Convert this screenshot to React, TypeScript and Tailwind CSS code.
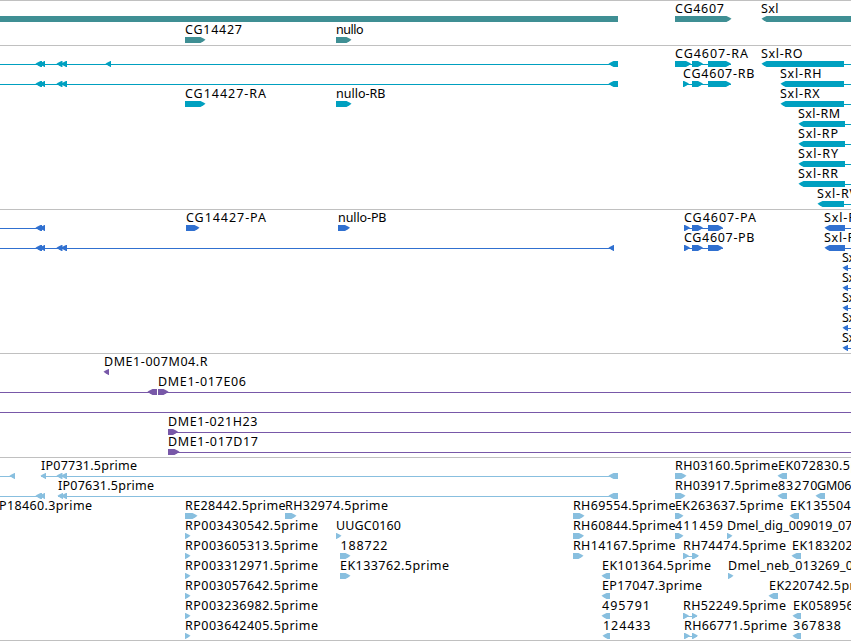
type Label = { text: string; x: number; end?: number };

// l / r = strand of an arrow, line = intron, bar = feature without a head
type Feature = ["l" | "r" | "line" | "bar", number, number];

type RowData = { labels?: Label[]; features: Feature[] };

interface TrackProps {
  name: string;
  color: string;
  rows: RowData[];
  rowHeight?: number;
  className: string;
}

const HEAD = 5;
const TOP = 15;

const label = (text: string, x: number, end?: number): Label => ({ text, x, end });

// Exons shared by several transcripts
const cg4607: Feature[] = [["r", 692, 703], ["r", 708, 731]];
const exonsA: Feature[] = [["l", 35.5, 42], ["l", 39.5, 45]];
const exonsB: Feature[] = [["l", 56.5, 62.5], ["l", 61, 67]];

const sxlTranscript = (name: string): RowData => ({
  labels: [label(name, 798, name === "Sxl-RM" ? 840 : 838)],
  features: [["l", 798.5, 845], ["line", 845, 851]],
});

const sxlProtein = (): RowData => ({
  labels: [label("Sxl", 842, 858)],
  features: [["l", 842.5, 848], ["line", 848, 851]],
});

const genes: RowData[] = [
  {
    labels: [label("CG4607", 675, 724), label("Sxl", 761, 778.5)],
    features: [["bar", 0, 618], ["r", 675, 731.5], ["l", 761.5, 870]],
  },
  {
    labels: [label("CG14427", 185, 242), label("nullo", 336, 363.5)],
    features: [["r", 185, 205.5], ["r", 336, 351.5]],
  },
];

const transcripts: RowData[] = [
  {
    labels: [label("CG4607-RA", 675, 748), label("Sxl-RO", 761, 802.5)],
    features: [
      ["line", 0, 618], ...exonsA, ...exonsB, ["l", 105.5, 111], ["l", 608.5, 618],
      ["line", 675, 731], ["r", 675, 691], ...cg4607,
      ["l", 761.5, 844], ["line", 844, 851],
    ],
  },
  {
    labels: [label("CG4607-RB", 683, 754.5), label("Sxl-RH", 780, 821.5)],
    features: [
      ["line", 0, 618], ...exonsA, ...exonsB, ["l", 608.5, 618],
      ["line", 683, 731], ["r", 683, 689], ...cg4607,
      ["l", 780.5, 844], ["line", 844, 851],
    ],
  },
  {
    labels: [label("CG14427-RA", 185, 266), label("nullo-RB", 336, 385.5), label("Sxl-RX", 780, 819.5)],
    features: [["r", 185, 205.5], ["r", 336, 351.5], ["l", 780.5, 844], ["line", 844, 851]],
  },
  sxlTranscript("Sxl-RM"),
  sxlTranscript("Sxl-RP"),
  sxlTranscript("Sxl-RY"),
  sxlTranscript("Sxl-RR"),
  {
    labels: [label("Sxl-RV", 817, 857)],
    features: [["l", 817.5, 844], ["line", 844, 851]],
  },
];

const cg4607Protein: Feature[] = [["line", 684, 723], ["r", 684, 690], ["r", 692, 703], ["r", 708, 723]];

const proteins: RowData[] = [
  {
    labels: [
      label("CG14427-PA", 186, 266), label("nullo-PB", 338, 386.5),
      label("CG4607-PA", 684, 756), label("Sxl-PA", 824, 864),
    ],
    features: [
      ["line", 0, 45], ...exonsA, ["r", 186, 199.5], ["r", 338, 350],
      ...cg4607Protein, ["l", 824.5, 845], ["line", 845, 851],
    ],
  },
  {
    labels: [label("CG4607-PB", 684, 754.5), label("Sxl-PB", 824, 864)],
    features: [
      ["line", 0, 614], ...exonsA, ...exonsB, ["l", 608.5, 614],
      ...cg4607Protein, ["l", 824.5, 845], ["line", 845, 851],
    ],
  },
  sxlProtein(),
  sxlProtein(),
  sxlProtein(),
  sxlProtein(),
  sxlProtein(),
];

const bacs: RowData[] = [
  { labels: [label("DME1-007M04.R", 104, 207.5)], features: [["l", 103.5, 109]] },
  {
    labels: [label("DME1-017E06", 158, 246)],
    features: [["line", 0, 157], ["l", 147.5, 157], ["line", 158, 851], ["r", 158, 168.5]],
  },
  { features: [["line", 0, 851]] },
  { labels: [label("DME1-021H23", 168, 257.5)], features: [["line", 168, 851], ["r", 168, 178]] },
  { labels: [label("DME1-017D17", 168, 258)], features: [["line", 168, 851], ["r", 168, 179.5]] },
];

const ests: RowData[] = [
  {
    labels: [label("IP07731.5prime", 41, 137), label("RH03160.5prime", 675, 778), label("EK072830.5prime", 778, 887)],
    features: [
      ["line", 0, 15], ["l", 9.5, 15], ["line", 41, 618], ["l", 40.5, 46], ...exonsB,
      ["l", 608.5, 618], ["r", 675, 686.5], ["l", 777.5, 787],
    ],
  },
  {
    labels: [
      label("IP07631.5prime", 58, 154), label("RH03917.5prime", 675, 778),
      label("83270", 778, 817.5), label("GM06", 817, 851.5),
    ],
    features: [
      ["line", 0, 45], ...exonsA, ["line", 58, 618], ["l", 57.5, 63], ["l", 61, 67],
      ["l", 608.5, 618], ["r", 675, 685.5], ["l", 777.5, 787], ["l", 815.5, 825],
    ],
  },
  {
    labels: [
      label("P18460.3prime", -1, 92), label("RE28442.5prime", 185, 285.5), label("RH32974.5prime", 285, 388),
      label("RH69554.5prime", 573, 675.5), label("EK263637.5prime", 675, 783.5), label("EK135504.5prime", 790, 899),
    ],
    features: [["r", 185, 197.5], ["r", 285, 296.5], ["r", 573, 584.5], ["r", 675, 683.5], ["l", 789.5, 799]],
  },
  {
    labels: [
      label("RP003430542.5prime", 185, 318), label("UUGC0160", 336, 401), label("RH60844.5prime", 573, 675.5),
      label("411459", 675, 723), label("Dmel_dig_009019_07", 727, 852.5),
    ],
    features: [["r", 185, 190.5], ["r", 336, 341.5], ["r", 573, 584], ["r", 675, 683.5], ["r", 727, 732.5]],
  },
  {
    labels: [
      label("RP003605313.5prime", 185, 318), label("188722", 340.5, 387.5), label("RH14167.5prime", 573, 675.5),
      label("RH74474.5prime", 683, 786), label("EK183202.5prime", 792, 901),
    ],
    features: [
      ["r", 185, 190.5], ["r", 340, 350.5], ["r", 573, 583.5],
      ["line", 683, 698], ["r", 683, 689], ["r", 692, 699], ["l", 791.5, 801],
    ],
  },
  {
    labels: [
      label("RP003312971.5prime", 185, 318), label("EK133762.5prime", 340, 449),
      label("EK101364.5prime", 602, 711), label("Dmel_neb_013269_0", 728, 853),
    ],
    features: [["r", 185, 190.5], ["r", 340, 350.5], ["l", 601.5, 610], ["r", 728, 733.5]],
  },
  {
    labels: [label("RP003057642.5prime", 185, 318), label("EP17047.3prime", 602, 702), label("EK220742.5prime", 769, 878)],
    features: [["r", 185, 190.5], ["l", 601.5, 610], ["l", 768.5, 778]],
  },
  {
    labels: [
      label("RP003236982.5prime", 185, 318), label("495791", 602, 650),
      label("RH52249.5prime", 683, 786), label("EK058956.5prime", 793, 902),
    ],
    features: [
      ["r", 185, 190.5], ["l", 601.5, 610],
      ["line", 683, 697], ["r", 683, 689], ["r", 692, 697.5], ["l", 792.5, 801],
    ],
  },
  {
    labels: [
      label("RP003642405.5prime", 185, 318), label("124433", 603, 650.5),
      label("RH66771.5prime", 684, 787), label("367838", 793, 841),
    ],
    features: [
      ["r", 185, 190.5], ["l", 602.5, 610],
      ["line", 684, 697], ["r", 684, 690], ["r", 692, 698], ["l", 792.5, 801],
    ],
  },
];

function Glyph({ feature }: { feature: Feature }) {
  const [kind, start, end] = feature;

  if (kind === "line") return <rect x={start} y={TOP + 3} width={end - start} height={1} />;
  if (kind === "bar") return <rect x={start} y={TOP} width={end - start} height={6} />;

  // Arrow head, slightly bulged so that it stays solid at this size
  const dir = kind === "r" ? 1 : -1;
  const tip = kind === "r" ? end : start;
  const tail = kind === "r" ? start : end;
  const neck = tip - dir * HEAD;
  const bulge = tip - dir * 2;
  const points = [
    [tail, TOP],
    [neck, TOP],
    [bulge, TOP + 1.4],
    [tip, TOP + 2.7],
    [bulge, TOP + 4.2],
    [neck, TOP + 6],
    [tail, TOP + 6],
  ];
  return <polygon points={points.map((p) => p.join(",")).join(" ")} />;
}

function Track({ name, color, rows, rowHeight = 20, className }: TrackProps) {
  return (
    <section aria-label={name} className={`flex flex-col border-t border-[#c0c0c0] ${className}`}>
      {rows.map((row, idx) => (
        <svg key={idx} width={851} height={rowHeight} className="block shrink-0 overflow-visible">
          <g fill={color}>
            {row.features.map((feature, i) => (
              <Glyph key={i} feature={feature} />
            ))}
          </g>
          {row.labels?.map((item) => (
            <text
              key={item.text}
              x={item.x}
              y={12}
              textLength={item.end ? item.end - item.x : undefined}
              className="fill-black text-[12.5px]"
            >
              {item.text}
            </text>
          ))}
        </svg>
      ))}
    </section>
  );
}

export default function App() {
  return (
    <main className="flex h-[641px] w-[851px] flex-col overflow-hidden bg-white font-['Noto_Sans',sans-serif]">
      <Track name="Genes" color="#3f8f94" rows={genes} rowHeight={21} className="pb-[2px]" />
      <Track name="Transcripts" color="#00a0c0" rows={transcripts} className="pb-[3px]" />
      <Track name="Proteins" color="#3070d0" rows={proteins} className="pb-[3px]" />
      <Track name="BACs" color="#7858a8" rows={bacs} className="pb-[3px]" />
      <Track name="ESTs" color="#88bfdf" rows={ests} className="border-b pb-[2px]" />
    </main>
  );
}
